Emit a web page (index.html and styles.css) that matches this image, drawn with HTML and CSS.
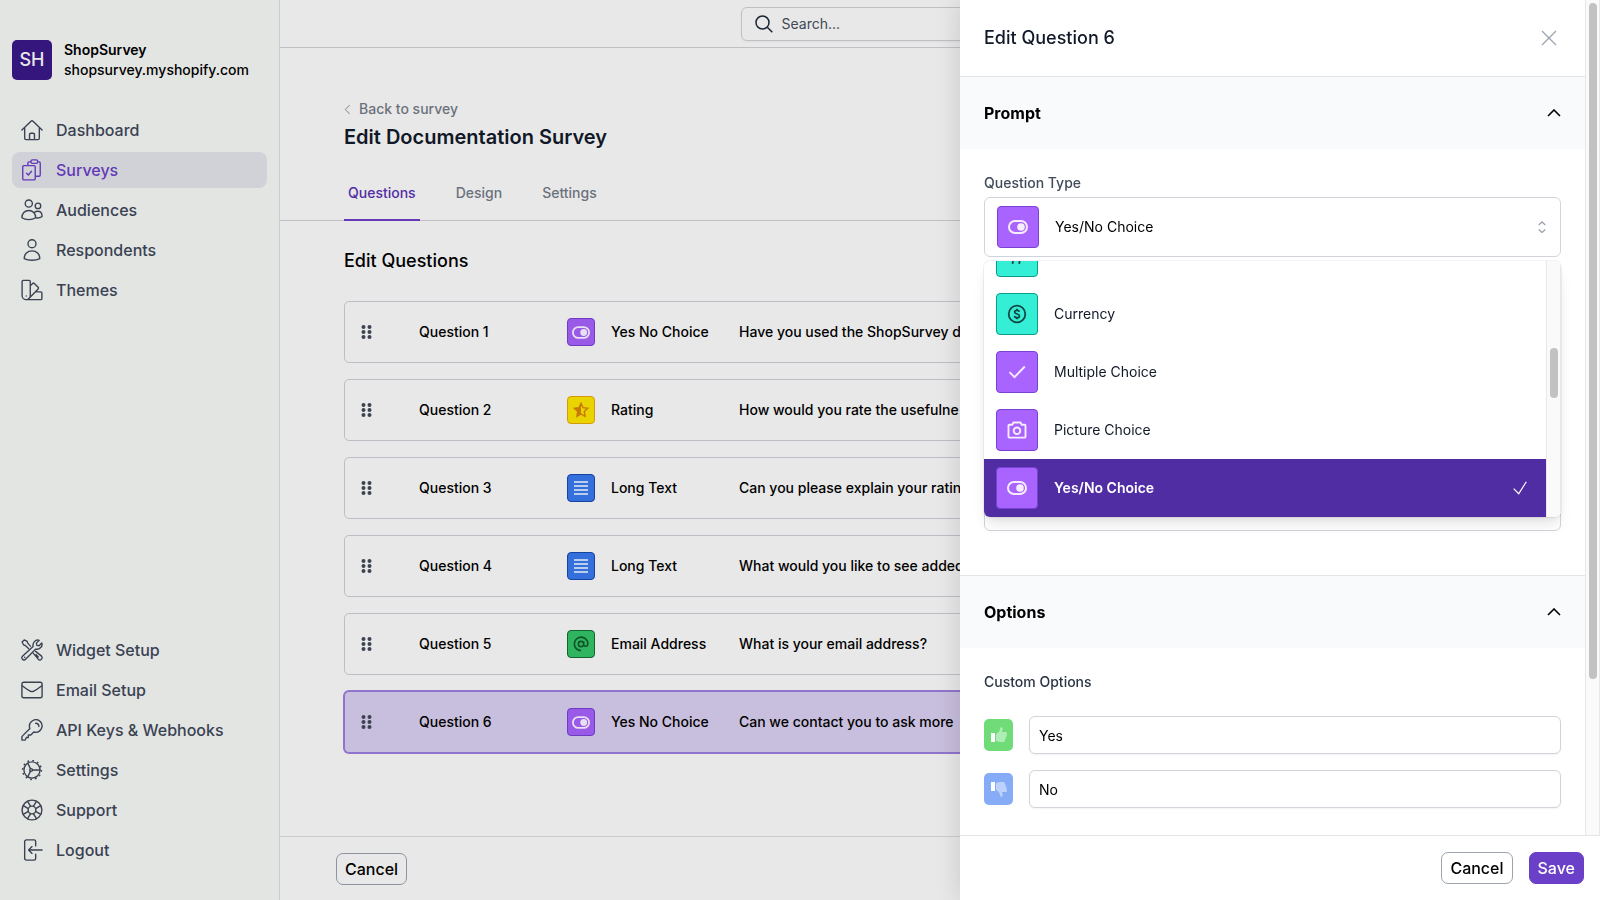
FILE: index.html
```html
<!DOCTYPE html>
<html lang="en">
<head>
<meta charset="utf-8">
<meta name="viewport" content="width=device-width, initial-scale=1">
<title>ShopSurvey – Edit Documentation Survey</title>
<link rel="stylesheet" href="styles.css">
</head>
<body>
<svg class="sprite" aria-hidden="true">
  <symbol id="i-home" viewBox="0 0 24 24"><path d="M1 12 10.9 2.4a1.6 1.6 0 0 1 2.2 0L23 12M4 9.5V21a1.5 1.5 0 0 0 1.5 1.5h13A1.5 1.5 0 0 0 20 21V9.5M9.3 22.5V17a1.5 1.5 0 0 1 1.5-1.5h2.4a1.5 1.5 0 0 1 1.5 1.5v5.5"/></symbol>
  <symbol id="i-surveys" viewBox="0 0 24 24"><path d="M3.2 7.200h11a1.300 1.300 0 0 1 1.300 1.300v13a1.300 1.300 0 0 1-1.300 1.300h-11a1.300 1.300 0 0 1-1.300-1.300v-13a1.300 1.300 0 0 1 1.300-1.300ZM6 15.500l2 2 3.500-4.200M7.500 7V4.500A1.300 1.300 0 0 1 8.800 3.200h1.700M18.500 3.200h1.200A1.300 1.300 0 0 1 21 4.500v13a1.300 1.300 0 0 1-1.300 1.300h-4"/><rect x="10.800" y="1" width="7.400" height="3.800" rx="1.700"/></symbol>
  <symbol id="i-audiences" viewBox="0 0 24 24"><circle cx="8.500" cy="5" r="3.900"/><circle cx="18.500" cy="7.500" r="3"/><path d="M1 20.500c0-4.500 3-8 7.500-8s7.500 3.500 7.500 8c-2 1.400-4.500 2-7.500 2s-5.500-.6-7.500-2ZM14.500 14.800c1-.9 2.300-1.400 3.800-1.400 2.700 0 4.700 2.100 4.700 5.600-1.700 1.400-4 1.900-7 1.600"/></symbol>
  <symbol id="i-person" viewBox="0 0 24 24"><circle cx="12" cy="5.200" r="4.400"/><path d="M3.500 21.300c0-4.800 3.500-8.300 8.500-8.300s8.500 3.500 8.500 8.300c-2.400 1.300-5 1.900-8.500 1.900s-6.100-.6-8.500-1.900Z"/></symbol>
  <symbol id="i-themes" viewBox="0 0 24 24"><path d="M2.500 1.500h6.300a1.300 1.300 0 0 1 1.300 1.300v15.500a4.200 4.200 0 0 1-4.400 4.200 4.400 4.400 0 0 1-4.500-4.200V2.800a1.300 1.300 0 0 1 1.300-1.300ZM10.100 7.500l2.600-2.700a1.300 1.300 0 0 1 1.800 0l4.200 4.300a1.300 1.300 0 0 1 0 1.800L7.800 22M15.500 14h6a1.300 1.300 0 0 1 1.300 1.300v5.900a1.300 1.300 0 0 1-1.300 1.300H5.500M5.700 18.500v.1"/></symbol>
  <symbol id="i-tools" viewBox="0 0 24 24"><path d="M10.300 7.800 7.300 4.500 6.800 2.700 3.500 1 1.200 3.300l1.700 3.200 1.800.6 3.500 3.300M13.500 15.700l5.300 6.300a2.300 2.300 0 0 0 3.600-3.300l-6.500-5.200M1.600 22.200a2.400 2.400 0 0 1 0-3.400L13.200 8.100c-.8-3.600 2.300-8.100 6.700-6.700l-3.100 3.100.5 2.400 2.400.5 3-3.100c1.400 4.400-3 7.500-6.600 6.700L5 22.200a2.400 2.400 0 0 1-3.400 0ZM4 19.900l.1-.1M16.500 17l2.300 2.600"/></symbol>
  <symbol id="i-mail" viewBox="0 0 24 24"><rect x="1" y="3.500" width="22" height="17" rx="2"/><path d="M1.300 7.300c2.900 2.200 5.700 4.400 8.700 5.900 1.300.8 2.700.8 4 0 3-1.500 5.800-3.700 8.700-5.900"/></symbol>
  <symbol id="i-key" viewBox="0 0 24 24"><path d="M21.300 3a7 7 0 0 0-11.600 7.300L1.400 18.700a1.300 1.300 0 0 0-.4 1V23h3.600l1.200-2.800H8v-2.700h2.700l3.300-3.300A7 7 0 0 0 21.300 3ZM16 4.700c2.200 0 3.500 1.300 3.500 3.500"/></symbol>
  <symbol id="i-gear" viewBox="0 0 24 24"><circle cx="12" cy="12" r="8.800"/><circle cx="12" cy="12" r="10.300" stroke-linecap="butt" stroke-dasharray="1.900 3.493"/><circle cx="11" cy="12" r="1.500"/><path d="M12.500 12h8M10.300 10.500 7.400 4.600M10.300 13.500l-2.900 5.900"/></symbol>
  <symbol id="i-support" viewBox="0 0 24 24"><circle cx="12" cy="12" r="10.800"/><circle cx="12" cy="12" r="4.200"/><path d="M8 10.500 2.500 7.200M10.500 8 7.200 2.500M13.500 8l3.300-5.500M16 10.500l5.500-3.300M16 13.500l5.500 3.300M13.500 16l3.300 5.500M10.500 16l-3.300 5.500M8 13.500l-5.500 3.300"/></symbol>
  <symbol id="i-logout" viewBox="0 0 24 24"><path d="M16 7.500V2.800a1.800 1.800 0 0 0-1.800-1.800H5.800A1.800 1.800 0 0 0 4 2.800v18.400A1.800 1.800 0 0 0 5.800 23h8.400a1.800 1.800 0 0 0 1.800-1.800v-4.700M23 12H8.500M12 8.300 8.300 12l3.700 3.700"/></symbol>
  <symbol id="i-search" viewBox="0 0 18 18"><circle cx="7.500" cy="7.500" r="6.500"/><path d="m12.300 12.300 5 5"/></symbol>
  <symbol id="i-toggle" viewBox="0 0 20 14"><rect x="1" y="1" width="18" height="12" rx="6" fill="none" stroke="currentColor" stroke-width="2"/><circle cx="13" cy="7" r="3.800" fill="currentColor"/></symbol>
  <symbol id="i-star" viewBox="0 0 18 18"><path d="M9 1.500l2.300 4.900 5.200.7-3.800 3.700.9 5.300L9 13.500l-4.600 2.600.9-5.300L1.500 7.100l5.200-.7Z" fill="none" stroke="currentColor" stroke-width="1.600"/><path d="M9 1.500v12l-4.600 2.600.9-5.300L1.500 7.100l5.200-.7Z" fill="currentColor"/></symbol>
  <symbol id="i-lines" viewBox="0 0 16 16"><path d="M1 2h14M1 6h14M1 10h14M1 14h14" stroke="currentColor" stroke-width="2" fill="none"/></symbol>
  <symbol id="i-at" viewBox="0 0 18 18"><path d="M12 9a3 3 0 1 1-6 0 3 3 0 0 1 6 0V6M12 9c0 3.600 4.700 3.400 4.700-.5A7.600 7.600 0 1 0 9 16.500" fill="none" stroke="currentColor" stroke-width="1.800"/></symbol>
  <symbol id="i-dollar" viewBox="0 0 20 20"><circle cx="10" cy="10" r="8.300" fill="none" stroke="currentColor" stroke-width="1.800"/><path d="M12.400 7.800c-.3-1.100-1.200-1.500-2.400-1.500-1.400 0-2.400.6-2.400 1.700 0 2.600 4.900 1.300 4.900 3.900 0 1.200-1.100 1.800-2.500 1.800s-2.400-.6-2.600-1.700M10 4.700v1.600M10 13.700v1.600" fill="none" stroke="currentColor" stroke-width="1.700"/></symbol>
  <symbol id="i-check" viewBox="0 0 18 14"><path d="m1.500 7.200 5 5L16.800 1.500" fill="none" stroke="currentColor" stroke-width="1.900"/></symbol>
  <symbol id="i-camera" viewBox="0 0 20 18"><path d="M2.300 3.800h3l1.200-2.300h7l1.200 2.300h3c.5 0 .8.300.8.800v11.200c0 .5-.3.800-.8.800H2.300c-.5 0-.8-.3-.8-.8V4.600c0-.5.300-.8.800-.8Z" fill="none" stroke="currentColor" stroke-width="1.900"/><circle cx="10" cy="9.800" r="3.300" fill="none" stroke="currentColor" stroke-width="1.900"/></symbol>
  <symbol id="i-hash" viewBox="0 0 18 18"><path d="M7 2 5 16M13 2l-2 14M2.500 6h14M1.500 12h14" fill="none" stroke="currentColor" stroke-width="1.600"/></symbol>
  <symbol id="i-grip" viewBox="0 0 12 16"><g fill="currentColor"><circle cx="2.500" cy="3" r="2"/><circle cx="8.500" cy="3" r="2"/><circle cx="2.500" cy="8" r="2"/><circle cx="8.500" cy="8" r="2"/><circle cx="2.500" cy="13" r="2"/><circle cx="8.500" cy="13" r="2"/></g></symbol>
  <symbol id="i-chevron-up" viewBox="0 0 14 8"><path d="m1 7 6-6 6 6" fill="none" stroke="currentColor" stroke-width="1.600"/></symbol>
  <symbol id="i-thumb" viewBox="0 0 16 16"><path d="M0 6h4v9H0z" fill="#fff"/><path d="M5 7.500 8.500 4 9.200 1c.3-1.100 2.300-1 2.500.5.100 1.300-.3 2.300-.8 3.500h3.600c1.800 0 1.900 1.900.9 2.500.7.800.5 1.900-.4 2.300.3 1-.1 1.700-.8 2 .2 1-.1 3.200-2.200 3.200H9c-1.700 0-3-.8-4-1.500Z" fill="#fff" opacity=".45"/></symbol>
</svg>

<div class="app">
  <aside class="sidebar">
    <div class="brand">
      <span class="brand-logo">SH</span>
      <div class="brand-text"><strong>ShopSurvey</strong><span>shopsurvey.myshopify.com</span></div>
    </div>
    <nav class="nav" aria-label="Main">
      <a class="nav-link" href="#"><svg class="nav-icon"><use href="#i-home"/></svg>Dashboard</a>
      <a class="nav-link nav-link-active" href="#" aria-current="page"><svg class="nav-icon"><use href="#i-surveys"/></svg>Surveys</a>
      <a class="nav-link" href="#"><svg class="nav-icon"><use href="#i-audiences"/></svg>Audiences</a>
      <a class="nav-link" href="#"><svg class="nav-icon"><use href="#i-person"/></svg>Respondents</a>
      <a class="nav-link" href="#"><svg class="nav-icon"><use href="#i-themes"/></svg>Themes</a>
    </nav>
    <nav class="nav nav-bottom" aria-label="Account">
      <a class="nav-link" href="#"><svg class="nav-icon"><use href="#i-tools"/></svg>Widget Setup</a>
      <a class="nav-link" href="#"><svg class="nav-icon"><use href="#i-mail"/></svg>Email Setup</a>
      <a class="nav-link" href="#"><svg class="nav-icon"><use href="#i-key"/></svg>API Keys &amp; Webhooks</a>
      <a class="nav-link" href="#"><svg class="nav-icon"><use href="#i-gear"/></svg>Settings</a>
      <a class="nav-link" href="#"><svg class="nav-icon"><use href="#i-support"/></svg>Support</a>
      <a class="nav-link" href="#"><svg class="nav-icon"><use href="#i-logout"/></svg>Logout</a>
    </nav>
  </aside>

  <div class="main">
    <header class="topbar">
      <label class="search"><svg class="search-icon"><use href="#i-search"/></svg><input class="search-input" type="text" placeholder="Search..." aria-label="Search"></label>
    </header>
    <div class="page-head">
      <a class="back" href="#"><svg class="back-icon" viewBox="0 0 8 12"><path d="M6.500 1 1.500 6l5 5"/></svg>Back to survey</a>
      <h1 class="page-title">Edit Documentation Survey</h1>
      <nav class="tabs" aria-label="Survey">
        <a class="tab tab-active" href="#" aria-current="page">Questions</a>
        <a class="tab" href="#">Design</a>
        <a class="tab" href="#">Settings</a>
      </nav>
    </div>
    <main class="content">
      <h2 class="section-title">Edit Questions</h2>
      <ul class="questions">
        <li class="question"><svg class="grip"><use href="#i-grip"/></svg><span>Question 1</span><span class="kind"><span class="badge purple"><svg class="badge-toggle"><use href="#i-toggle"/></svg></span>Yes No Choice</span><span>Have you used the ShopSurvey d</span></li>
        <li class="question"><svg class="grip"><use href="#i-grip"/></svg><span>Question 2</span><span class="kind"><span class="badge yellow"><svg class="badge-icon"><use href="#i-star"/></svg></span>Rating</span><span>How would you rate the usefulne</span></li>
        <li class="question"><svg class="grip"><use href="#i-grip"/></svg><span>Question 3</span><span class="kind"><span class="badge blue"><svg class="badge-icon"><use href="#i-lines"/></svg></span>Long Text</span><span>Can you please explain your ratin</span></li>
        <li class="question"><svg class="grip"><use href="#i-grip"/></svg><span>Question 4</span><span class="kind"><span class="badge blue"><svg class="badge-icon"><use href="#i-lines"/></svg></span>Long Text</span><span>What would you like to see added</span></li>
        <li class="question"><svg class="grip"><use href="#i-grip"/></svg><span>Question 5</span><span class="kind"><span class="badge green"><svg class="badge-icon"><use href="#i-at"/></svg></span>Email Address</span><span>What is your email address?</span></li>
        <li class="question question-active"><svg class="grip"><use href="#i-grip"/></svg><span>Question 6</span><span class="kind"><span class="badge purple"><svg class="badge-toggle"><use href="#i-toggle"/></svg></span>Yes No Choice</span><span>Can we contact you to ask more</span></li>
      </ul>
    </main>
    <footer class="page-foot"><button class="button button-dim" type="button">Cancel</button></footer>
  </div>
</div>

<section class="drawer" role="dialog" aria-labelledby="drawer-title">
  <div class="drawer-scroll">
    <div class="drawer-body">
      <header class="drawer-head">
        <h2 class="drawer-title" id="drawer-title">Edit Question 6</h2>
        <button class="plain" type="button" aria-label="Close"><svg class="close-icon" viewBox="0 0 14 14"><path d="m0 0 14 14M14 0 0 14"/></svg></button>
      </header>
      <button class="panel-toggle" type="button" aria-expanded="true">Prompt<svg class="chevron"><use href="#i-chevron-up"/></svg></button>
      <div class="panel">
        <span class="label" id="type-label">Question Type</span>
        <div class="combo">
          <button class="combo-button" type="button" aria-haspopup="listbox" aria-expanded="true" aria-labelledby="type-label type-value">
            <span class="tile purple-bright"><svg class="tile-toggle"><use href="#i-toggle"/></svg></span><span class="combo-value" id="type-value">Yes/No Choice</span>
            <svg class="updown" viewBox="0 0 8 12"><path d="m.7 4 3.300-3 3.300 3M.7 8.500l3.300 3 3.300-3"/></svg>
          </button>
          <div class="menu">
            <ul class="options" role="listbox" aria-labelledby="type-label">
              <li class="option" role="option"><span class="tile teal"><svg class="tile-icon"><use href="#i-hash"/></svg></span>Number</li>
              <li class="option" role="option"><span class="tile teal"><svg class="tile-icon"><use href="#i-dollar"/></svg></span>Currency</li>
              <li class="option" role="option"><span class="tile purple-bright"><svg class="tile-check"><use href="#i-check"/></svg></span>Multiple Choice</li>
              <li class="option" role="option"><span class="tile purple-bright"><svg class="tile-icon"><use href="#i-camera"/></svg></span>Picture Choice</li>
              <li class="option option-selected" role="option" aria-selected="true"><span class="tile purple-bright"><svg class="tile-toggle"><use href="#i-toggle"/></svg></span>Yes/No Choice<svg class="option-check" viewBox="0 0 14 14"><path d="m.7 7.700 5 5L13.300.7"/></svg></li>
            </ul>
            <div class="track menu-track"><span class="thumb"></span></div>
          </div>
        </div>
        <textarea class="prompt-box" aria-label="Prompt"></textarea>
      </div>
      <button class="panel-toggle panel-toggle-ruled" type="button" aria-expanded="true">Options<svg class="chevron"><use href="#i-chevron-up"/></svg></button>
      <div class="panel">
        <h3 class="label options-label">Custom Options</h3>
        <div class="choices">
          <label class="choice"><span class="thumb-badge lime"><svg class="thumb-icon"><use href="#i-thumb"/></svg></span><input class="field" type="text" value="Yes" aria-label="Yes option"></label>
          <label class="choice"><span class="thumb-badge sky"><svg class="thumb-icon thumb-down"><use href="#i-thumb"/></svg></span><input class="field" type="text" value="No" aria-label="No option"></label>
        </div>
      </div>
    </div>
    <div class="track drawer-track"><span class="thumb"></span></div>
  </div>
  <footer class="drawer-foot">
    <button class="button" type="button">Cancel</button>
    <button class="button button-primary" type="button">Save</button>
  </footer>
</section>
</body>
</html>
```
FILE: styles.css
```css
* { box-sizing: border-box; }
body { margin: 0; font-family: Inter, "Liberation Sans", sans-serif; font-size: 14px; line-height: 20px; color: #000; background: #e8e8e8; overflow: hidden; }
h1, h2, h3, ul { margin: 0; padding: 0; font-weight: 400; }
ul { list-style: none; }
a { color: inherit; text-decoration: none; }
button, input, textarea { font: inherit; color: inherit; }
svg { display: block; flex: none; }
.sprite { display: none; }

.app { display: flex; height: 100vh; }
.sidebar { display: flex; flex-direction: column; flex: none; width: 280px; padding: 40px 12px 32px; background: #e3e5e3; border-right: 1px solid #cbccce; }
.brand { display: flex; align-items: center; gap: 12px; margin-bottom: 32px; font-weight: 500; }
.brand-logo { display: grid; place-items: center; width: 40px; height: 40px; border-radius: 5px; background: #34167d; color: #e8e8e8; font-size: 18px; }
.brand-text { display: flex; flex-direction: column; }
.brand-text strong { font-weight: 600; }
.nav { display: flex; flex-direction: column; gap: 4px; }
.nav-bottom { margin-top: auto; }
.nav-link { display: flex; align-items: center; gap: 13px; height: 36px; padding: 0 9px; border-radius: 8px; font-size: 16px; font-weight: 500; color: #3a4252; }
.nav-link-active { background: #d1d2d7; color: #6339b8; }
.nav-icon { width: 22px; height: 22px; fill: none; stroke: currentColor; stroke-width: 1.5; stroke-linecap: round; stroke-linejoin: round; }

.main { display: flex; flex-direction: column; flex: 1; min-width: 0; }
.topbar { display: flex; justify-content: center; align-items: center; height: 48px; padding-left: 1px; border-bottom: 1px solid #bfc0c4; }
.search { display: flex; align-items: center; gap: 9px; width: 400px; height: 34px; padding: 0 13px; border: 1px solid #bfc0c4; border-radius: 6px; box-shadow: 0 1px 2px rgba(0, 0, 0, .05); }
.search-icon { width: 18px; height: 18px; fill: none; stroke: #1d2636; stroke-width: 1.5; }
.search-input { flex: 1; min-width: 0; padding: 0; border: 0; outline: 0; background: none; }
.search-input::placeholder { color: #414856; opacity: 1; }
.page-head { padding: 51px 64px 0; border-bottom: 1px solid #bfc0c4; }
.back { display: flex; align-items: center; gap: 8px; font-weight: 500; color: #6b717c; }
.back-icon { width: 7px; height: 11px; fill: none; stroke: #9ba0a9; stroke-width: 1.2; }
.page-title { margin-top: 4px; font-size: 20px; line-height: 28px; font-weight: 600; color: #111827; }
.tabs { display: flex; gap: 32px; margin: 22px 0 -1px; font-weight: 500; color: #6b717c; }
.tab { padding: 10px 4px 16px; border-bottom: 2px solid transparent; }
.tab-active { border-color: #6339b8; color: #512da3; }
.content { flex: 1; padding: 26px 64px 0; }
.section-title { font-size: 18px; line-height: 28px; font-weight: 500; }
.questions { display: flex; flex-direction: column; gap: 16px; margin-top: 26px; }
.question { display: grid; grid-template-columns: 58px 148px 172px 1fr; align-items: center; height: 62px; padding-left: 16px; border: 1px solid #bcbec6; border-radius: 5px; font-weight: 500; white-space: nowrap; }
.question-active { background: #c8bedd; border-color: #9074cb; box-shadow: 0 0 0 1px #9074cb; }
.grip { width: 12px; height: 16px; color: #3c4350; }
.kind { display: flex; align-items: center; gap: 16px; }
.badge { display: grid; place-items: center; width: 28px; height: 28px; border: 1px solid; border-radius: 4px; }
.badge-icon { width: 16px; height: 16px; }
.badge-toggle { width: 18px; height: 13px; }
.purple { background: #995ae8; border-color: #6e3cc2; }
.purple svg { color: #e8e0f2; }
.yellow { background: #e9d400; border-color: #d59a0b; }
.yellow svg { color: #c77a08; }
.blue { background: #356fdc; border-color: #1443a0; }
.blue svg { color: #b9cdee; }
.green { background: #2fb560; border-color: #12632f; }
.green svg { color: #0e5226; }
.page-foot { display: flex; align-items: center; height: 64px; padding: 0 56px; border-top: 1px solid #cbccce; }

.button { height: 32px; padding: 0 8px; border: 1px solid #9ca3af; border-radius: 7px; background: #fff; font-size: 16px; font-weight: 500; line-height: 24px; }
.button-dim { background: #e8e8e8; border-color: #8e949f; }
.button-primary { border-color: #6b40c8; background: #6b40c8; color: #fff; }

.drawer { position: fixed; top: 0; right: 0; bottom: 0; display: flex; flex-direction: column; width: 640px; background: #fff; box-shadow: 0 0 24px rgba(0, 0, 0, .14); }
.drawer-scroll { display: flex; flex: 1; min-height: 0; }
.drawer-body { flex: 1; overflow: hidden; }
.drawer-head { display: flex; align-items: center; justify-content: space-between; height: 77px; padding: 0 29px 0 24px; border-bottom: 1px solid #e3e5e9; }
.drawer-title { font-size: 18px; line-height: 28px; font-weight: 500; color: #111827; }
.plain { padding: 0; border: 0; background: none; }
.close-icon { width: 14px; height: 14px; fill: none; stroke: #9ca3af; stroke-width: 1.3; overflow: visible; }
.panel-toggle { display: flex; align-items: center; justify-content: space-between; width: 100%; height: 72px; padding: 0 24px; border: 0; background: #f9fafc; font-size: 16px; font-weight: 700; }
.panel-toggle-ruled { height: 73px; border-top: 1px solid #e3e5e9; }
.chevron { width: 14px; height: 8px; }
.panel { display: flex; flex-direction: column; padding: 24px 24px 0; }
.label { font-size: 14px; font-weight: 500; color: #414b5a; }
.combo { position: relative; margin-top: 4px; }
.combo-button { display: flex; align-items: center; gap: 16px; width: 100%; height: 60px; padding: 0 14px 0 12px; border: 1px solid #d1d5db; border-radius: 6px; background: #fff; text-align: left; }
.combo-value { flex: 1; }
.updown { width: 8px; height: 12px; fill: none; stroke: #9ca3af; stroke-width: 1.3; }
.tile { display: grid; place-items: center; flex: none; width: 42px; height: 42px; border: 1px solid; border-radius: 4px; }
.tile-toggle { width: 20px; height: 14px; }
.tile-icon { width: 20px; height: 20px; }
.tile-check { width: 18px; height: 14px; }
.purple-bright { background: #a964ff; border-color: #7a42d2; color: #f6eeff; }
.teal { background: #35eed6; border-color: #0c9c8b; color: #104842; }
.menu { position: absolute; top: 64px; left: 0; right: 0; display: flex; height: 256px; border-radius: 6px; overflow: hidden; background: #fff; box-shadow: 0 0 0 1px rgba(0, 0, 0, .05), 0 10px 15px -3px rgba(0, 0, 0, .1), 0 4px 6px -2px rgba(0, 0, 0, .05); }
.options { display: flex; flex: 1; flex-direction: column; justify-content: flex-end; overflow: hidden; }
.option { display: flex; align-items: center; flex: none; gap: 16px; height: 58px; padding: 0 19px 0 12px; color: #111827; }
.option-selected { background: #512da3; color: #fff; font-weight: 600; }
.option-check { width: 14px; height: 14px; margin-left: auto; fill: none; stroke: #fff; stroke-width: 1.2; }
.track { flex: none; width: 15px; padding: 0 2px 0 3px; border: solid #e8e8e8; border-width: 0 1px; background: #fafafa; }
.thumb { display: block; width: 8px; border-radius: 4px; background: #c2c2c2; }
.menu-track .thumb { height: 50px; margin-top: 87px; }
.drawer-track .thumb { height: 676px; margin-top: 3px; }
.prompt-box { height: 231px; margin: 43px 0 44px; border: 1px solid #d1d5db; border-radius: 6px; resize: none; }
.options-label { color: #2b3544; }
.choices { display: flex; flex-direction: column; gap: 16px; margin-top: 24px; }
.choice { display: flex; align-items: center; gap: 16px; }
.thumb-badge { display: grid; place-items: center; width: 29px; height: 32px; border-radius: 5px; }
.lime { background: #6fdc78; }
.sky { background: #86acf7; }
.thumb-icon { width: 16px; height: 16px; }
.thumb-down { transform: scaleY(-1); }
.field { flex: 1; min-width: 0; height: 38px; padding: 0 9px; border: 1px solid #d1d5db; border-radius: 6px; background: #fff; box-shadow: 0 1px 2px rgba(0, 0, 0, .05); }
.drawer-foot { display: flex; align-items: center; justify-content: flex-end; gap: 16px; height: 65px; padding: 0 16px; border-top: 1px solid #e3e5e9; }
```
